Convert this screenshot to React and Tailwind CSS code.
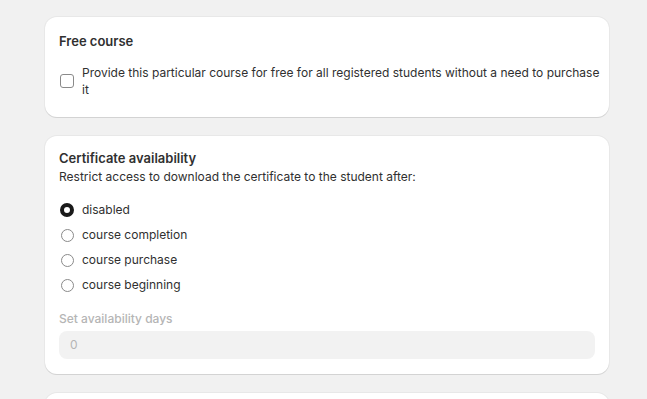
import { useState } from "react"

const options = ["disabled", "course completion", "course purchase", "course beginning"]

function Radio({ checked }) {
  return (
    <span
      className={
        checked
          ? "h-[14px] w-[14px] shrink-0 rounded-full border-[4px] border-[#1a1a1a] bg-white"
          : "h-[13px] w-[13px] shrink-0 rounded-full border border-[#8a8a8a] bg-white"
      }
    />
  )
}

export default function App() {
  const [selected, setSelected] = useState("disabled")

  return (
    <div
      className="min-h-screen bg-[#f1f1f1] pt-[17px] text-[12px] text-[#303030]"
      style={{ fontFamily: "Inter, 'Noto Sans', sans-serif" }}
    >
      <div className="ml-[45px] flex w-[564px] flex-col gap-[19px]">
        <section className="rounded-[12px] bg-white pl-[14px] pr-[8px] pt-[14px] pb-[19px] shadow-[0_1px_0_0_rgba(26,26,26,0.1),0_0_0_1px_rgba(26,26,26,0.04)]">
          <h2 className="text-[13px] font-semibold leading-[20px]">Free course</h2>
          <label className="mt-[13px] flex items-center gap-[8px]">
            <span className="ml-px h-[14px] w-[14px] shrink-0 rounded-[3px] border border-[#8a8a8a] bg-white" />
            <span className="leading-[17px]">
              Provide this particular course for free for all registered students without a need to purchase it
            </span>
          </label>
        </section>

        <section className="rounded-[12px] bg-white px-[14px] pt-[13px] pb-[15px] shadow-[0_1px_0_0_rgba(26,26,26,0.1),0_0_0_1px_rgba(26,26,26,0.04)]">
          <h2 className="text-[13px] font-semibold leading-[18px]">Certificate availability</h2>
          <p className="leading-[20px]">Restrict access to download the certificate to the student after:</p>

          <div className="mt-[13px] flex flex-col gap-[5px]">
            {options.map((o) => (
              <label
                key={o}
                className="flex h-[20px] items-center gap-[8px] pl-[1px]"
                onClick={() => setSelected(o)}
              >
                <span className="flex w-[14px] justify-center">
                  <Radio checked={selected === o} />
                </span>
                <span className="leading-[20px]">{o}</span>
              </label>
            ))}
          </div>

          <p className="mt-[14px] leading-[20px] font-medium text-[#b5b5b5]">Set availability days</p>
          <div className="mt-[2px] flex h-[28px] items-center rounded-[8px] bg-[#f2f2f2] px-[11px] text-[#b5b5b5]">
            0
          </div>
        </section>

        <section className="h-[40px] rounded-[12px] bg-white shadow-[0_1px_0_0_rgba(26,26,26,0.1),0_0_0_1px_rgba(26,26,26,0.04)]" />
      </div>
    </div>
  )
}
